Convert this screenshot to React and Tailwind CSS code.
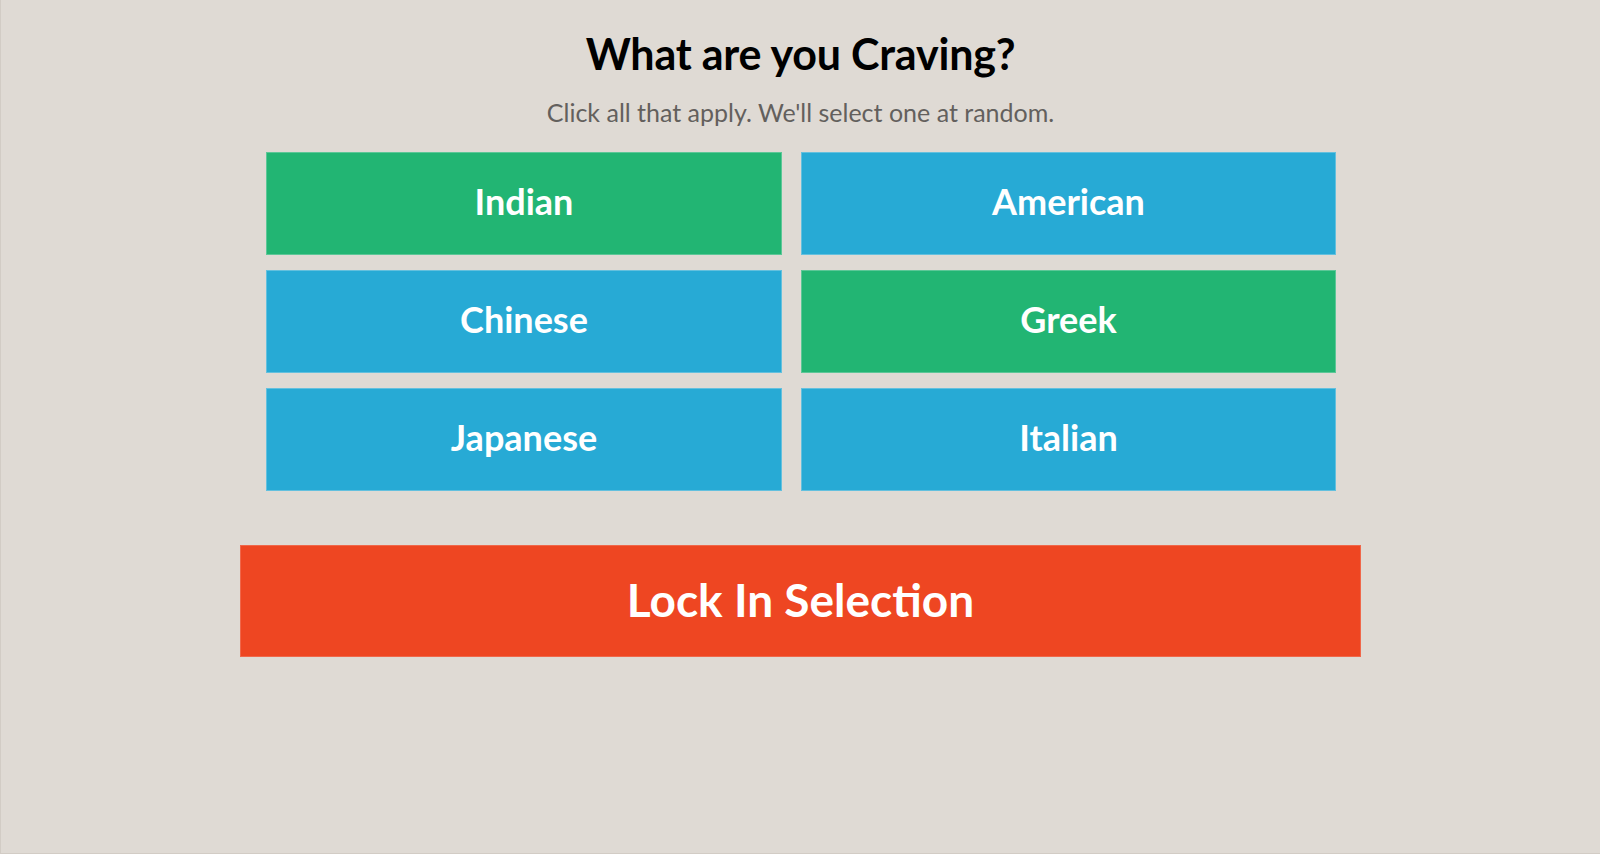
export default function App() {
  const items = [
    { name: "Indian", sel: true },
    { name: "American", sel: false },
    { name: "Chinese", sel: false },
    { name: "Greek", sel: true },
    { name: "Japanese", sel: false },
    { name: "Italian", sel: false },
  ];
  return (
    <div
      className="w-[1600px] h-[854px] bg-[#dfdad4] border-l border-b border-[#d2ccc5] flex flex-col items-center"
      style={{ fontFamily: "Lato, 'Open Sans', sans-serif" }}
    >
      <h1 className="mt-[25px] h-[56px] flex items-center text-[43px] font-bold text-black leading-none tracking-[-0.2px]">
        What are you Craving?
      </h1>
      <p className="mt-[16px] h-[30px] flex items-center text-[25px] text-[#63605d] leading-none">
        Click all that apply. We'll select one at random.
      </p>
      <div className="mt-[25px] grid grid-cols-[516px_535px] gap-x-[19px] gap-y-[15px] ml-[1px]">
        {items.map((it) => (
          <button
            key={it.name}
            className={`h-[103px] pb-[6px] flex items-center justify-center text-white text-[36px] font-bold leading-none border ${
              it.sel ? "bg-[#22b573] border-[#5cc797]" : "bg-[#27aad5] border-[#63c0de]"
            }`}
          >
            {it.name}
          </button>
        ))}
      </div>
      <button className="mt-[54px] w-[1121px] h-[112px] pb-[2px] bg-[#ee4622] border border-[#f0674a] text-white text-[46px] font-bold leading-none flex items-center justify-center">
        Lock In Selection
      </button>
    </div>
  );
}
